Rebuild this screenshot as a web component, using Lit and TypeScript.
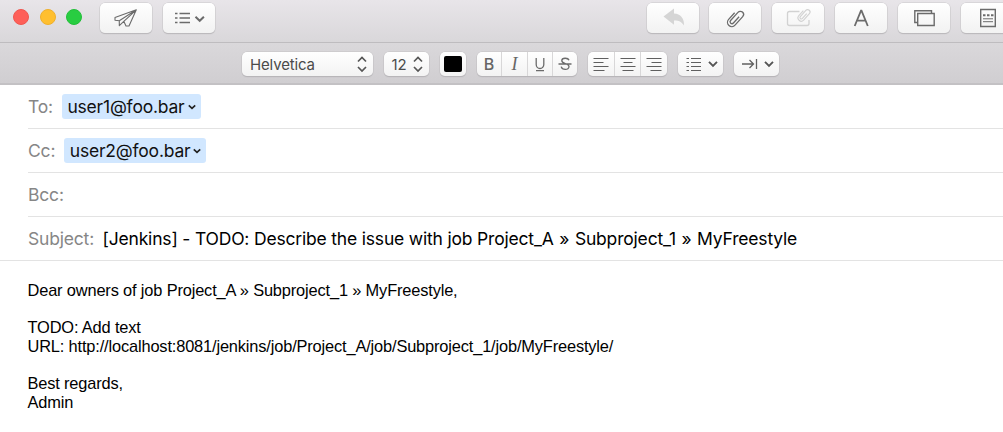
import { LitElement, html, css, svg } from "lit";
import { customElement } from "lit/decorators.js";

const chevron = svg`<path d="M0 0l4 4 4-4" fill="none" stroke="#555" stroke-width="1.9"/>`;

@customElement("app-root")
export class AppRoot extends LitElement {
  static styles = css`
    :host { display: block; width: 1003px; height: 432px; overflow: hidden; background: #fff; font-family: Inter, "Liberation Sans", sans-serif; color: #111; }
    * { box-sizing: border-box; }
    svg { display: block; flex: none; }
    .toolbar { height: 43px; padding: 3px 0 0 13px; display: flex; align-items: flex-start; background: linear-gradient(#e8e5e9, #d9d7da); border-bottom: 1px solid #bebcbf; }
    .lights { display: flex; flex: none; gap: 10.7px; padding-top: 6px; width: 87px; }
    .light { width: 16px; height: 16px; border-radius: 50%; border: 1px solid #f0564f; background: #fe5f58; }
    .light.yellow { background: #ffbf2f; border-color: #efb02c; }
    .light.green { background: #28cd41; border-color: #23bf3a; }
    .group { display: flex; flex: none; gap: 11px; }
    .group.right { margin-left: 431.6px; gap: 10.8px; }
    .btn { width: 52px; height: 30px; flex: none; border-radius: 5px; background: linear-gradient(#fff, #f2f2f2); box-shadow: 0 0 0 .5px #c9c7ca, 0 1px 1px #aaa8ab; }
    .format { height: 42px; padding: 9px 0 0 242px; display: flex; background: linear-gradient(#dad8db, #d0ced1); border-bottom: 2px solid #c3c1c4; }
    .ctl { height: 24px; flex: none; display: flex; border-radius: 5px; background: linear-gradient(#fff, #f3f3f3); box-shadow: 0 0 0 .5px #c3c1c4, 0 1px 1px #a9a7aa; margin-right: 11px; color: #4b4b4b; font-size: 15px; line-height: 26px; overflow: hidden; }
    .select { justify-content: space-between; padding: 0 5px 0 8px; }
    .font { width: 130.5px; letter-spacing: -.15px; }
    .size { width: 45.5px; }
    .color { width: 26px; padding: 4px; }
    .swatch { width: 18px; height: 16px; border-radius: 2px; background: #000; }
    .seg { height: 24px; flex: 1; border-left: 1px solid #d8d7d8; display: flex; justify-content: center; color: #666; font-size: 16px; line-height: 25px; }
    .seg:first-child { border-left: 0; }
    .bold { font-weight: 500; }
    .italic { font-family: "Liberation Serif", serif; font-style: italic; font-size: 18px; }
    .styles { width: 100px; }
    .aligns { width: 79px; }
    .menu { width: 45px; }
    .row { height: 44px; margin-left: 28px; display: flex; align-items: center; border-bottom: 1px solid #e3e3e3; font-size: 17.5px; line-height: 26px; letter-spacing: -.185px; white-space: pre; }
    .row.subject { margin-left: 0; padding-left: 28px; }
    .label { color: #868686; padding-top: 1px; }
    .chip { display: flex; align-items: center; height: 25px; padding: 1px 5px 0 5.5px; border-radius: 3px; background: #d1e7ff; gap: 3px; letter-spacing: -.2px; }
    .to { margin-left: 9px; width: 139px; }
    .cc { margin-left: 9px; width: 142px; }
    .value { margin-left: 8.5px; padding-top: 1px; color: #000; }
    .sep { margin: 0 .9px; }
    .body { padding: 20px 0 0 27.5px; font: 16.4px/18.7px "Liberation Sans", Arial, sans-serif; letter-spacing: -.157px; color: #000; }
    .line { height: 18.7px; white-space: pre; }
  `;

  private button(icon: unknown) {
    return html`<div class="btn"><svg width="52" height="30" fill="none" stroke="#6b6b6b" stroke-width="1.3">${icon}</svg></div>`;
  }

  private updown() {
    return html`<svg width="12" height="24" fill="none" stroke="#555" stroke-width="1.7"><path d="M2 9.5l4-4 4 4M2 15l4 4 4-4"/></svg>`;
  }

  private seg(d: string) {
    return html`<div class="seg"><svg width="24" height="24" stroke="#5f5f5f" stroke-width="1.2"><path d=${d}/></svg></div>`;
  }

  private chip(name: string, address: string) {
    return html`<div class="chip ${name}"><span class="addr">${address}</span><svg width="8" height="8" fill="none" stroke="#222" stroke-width="1.7"><path d="M.8 2.300l3.200 3L7.200 2.300"/></svg></div>`;
  }

  render() {
    return html`
      <div class="toolbar">
        <div class="lights"><div class="light"></div><div class="light yellow"></div><div class="light green"></div></div>
        <div class="group">
          ${this.button(svg`<path stroke-width="1.1" stroke-linejoin="round" d="M15 14.400L36.300 6.800 29 23H26L23.800 18.300 19.300 22.600V17.800L15 17.200zM19.300 17.800L36.300 6.800 23.800 18.300"/>`)}
          ${this.button(svg`<path stroke-width="1.4" d="M12 10.500h2.500M12 15h2.500M12 19.500h2.500M16.500 10.500H27M16.500 15H27M16.500 19.500H27"/><path stroke-width="2" d="M32.500 13.800l4.200 4 4.200-4"/>`)}
        </div>
        <div class="group right">
          ${this.button(svg`<path fill="#d5d5d5" stroke="none" d="M16.500 13.500L27 5.500V10.500C33.500 10.800 37.500 15.500 37 22.500 34.500 18.300 31 17.200 27 17.400V21.800z"/>`)}
          ${this.button(svg`<g transform="translate(26.500 15.200) rotate(42)"><path d="M-4.300 -3.500V5.500a4.300 4.300 0 0 0 8.600 0V-6a3.200 3.200 0 0 0-6.400 0V5a1.900 1.900 0 0 0 3.800 0V-3.500"/></g>`)}
          ${this.button(svg`<g stroke="#d2d2d2"><path d="M27.500 8.500H17.500a2 2 0 0 0-2 2V20.500a2 2 0 0 0 2 2H35a2 2 0 0 0 2-2V17"/><g transform="translate(32 11.800) rotate(42) scale(.75)" stroke-width="1.500"><path d="M-4.300 -3.500V5.500a4.300 4.300 0 0 0 8.600 0V-6a3.200 3.200 0 0 0-6.400 0V5a1.900 1.900 0 0 0 3.800 0V-3.500"/></g></g>`)}
          ${this.button(svg`<path stroke-width="1.800" d="M19.700 23L26 7.700H26.500L32.800 23M22 17.700H30.500"/>`)}
          ${this.button(svg`<path stroke-width="1.400" d="M19.500 19.500H16.800V7.800H33.500V10M19.700 10.500H36.200V22.500H19.700z"/>`)}
          ${this.button(svg`<path stroke-width="1.400" d="M19.700 6.500H34.300V23.500H19.700z"/><path stroke-width="2" stroke-dasharray="2.500 1.500" d="M22 12.200H33"/><path stroke-width="1" d="M22 15.800H32M22 18.700H32"/>`)}
        </div>
      </div>
      <div class="format">
        <div class="ctl select font"><span>Helvetica</span>${this.updown()}</div>
        <div class="ctl select size"><span>12</span>${this.updown()}</div>
        <div class="ctl color"><div class="swatch"></div></div>
        <div class="ctl styles">
          <div class="seg bold">B</div><div class="seg italic">I</div>
          <div class="seg"><svg width="20" height="24" fill="none" stroke="#6b6b6b" stroke-width="1.300"><path d="M6.200 6V12.500a3.800 4 0 0 0 7.600 0V6M6 18.700H14"/></svg></div>
          <div class="seg"><svg width="20" height="24" fill="none" stroke="#6b6b6b" stroke-width="1.300"><path d="M14 8.300C13 5.500 6.800 5.500 6.800 8.700 6.800 12 14 11 14 14.600 14 18.500 7 18.300 6.200 14.700M3.500 12H16.500"/></svg></div>
        </div>
        <div class="ctl aligns">
          ${this.seg("M4.500 6.500h15M4.500 10.500h10M4.500 14.500h15M4.500 18.500h11")}
          ${this.seg("M4.500 6.500h15M7.500 10.500h9M4.500 14.500h15M6.500 18.500h11")}
          ${this.seg("M4.500 6.500h15M9.500 10.500h10M4.500 14.500h15M8.500 18.500h11")}
        </div>
        <div class="ctl menu"><svg width="45" height="24" fill="none" stroke="#606060" stroke-width="1.200"><path d="M8.500 6.500h2.500M8.500 10.500h2.500M8.500 14.500h2.500M8.500 18.500h2.500M13 6.500h10M13 10.500h10M13 14.500h10M13 18.500h10"/><g transform="translate(31 9.800)">${chevron}</g></svg></div>
        <div class="ctl menu"><svg width="45" height="24" fill="none" stroke="#606060" stroke-width="1.300"><path d="M8 12H19M15.500 8l4 4-4 4M22.500 7V17"/><g transform="translate(31 9.800)">${chevron}</g></svg></div>
      </div>
      <div class="row"><span class="label">To:</span>${this.chip("to", "user1@foo.bar")}</div>
      <div class="row"><span class="label">Cc:</span>${this.chip("cc", "user2@foo.bar")}</div>
      <div class="row"><span class="label">Bcc:</span></div>
      <div class="row subject"><span class="label">Subject:</span><span class="value">[Jenkins] - TODO: Describe the issue with job Project_A <span class="sep">»</span> Subproject_1 <span class="sep">»</span> MyFreestyle</span></div>
      <div class="body">
        ${["Dear owners of job Project_A » Subproject_1 » MyFreestyle,", "", "TODO: Add text", "URL: http://localhost:8081/jenkins/job/Project_A/job/Subproject_1/job/MyFreestyle/", "", "Best regards,", "Admin"].map((t) => html`<div class="line">${t}</div>`)}
      </div>`;
  }
}
